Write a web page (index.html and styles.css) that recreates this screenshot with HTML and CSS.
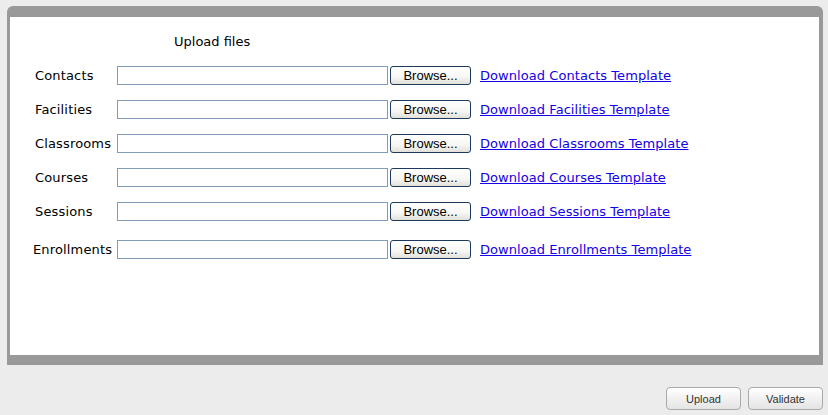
FILE: index.html
```html
<!DOCTYPE html>
<html>
<head>
<meta charset="utf-8">
<link rel="stylesheet" href="styles.css">
</head>
<body>
<div class="panel">
  <div class="title">Upload files</div>
  <div class="rows">
    <div class="row"><span class="label">Contacts</span><input class="file" type="text"><button class="browse">Browse...</button><a class="link" href="#">Download Contacts Template</a></div>
    <div class="row"><span class="label">Facilities</span><input class="file" type="text"><button class="browse">Browse...</button><a class="link" href="#">Download Facilities Template</a></div>
    <div class="row"><span class="label">Classrooms</span><input class="file" type="text"><button class="browse">Browse...</button><a class="link" href="#">Download Classrooms Template</a></div>
    <div class="row"><span class="label">Courses</span><input class="file" type="text"><button class="browse">Browse...</button><a class="link" href="#">Download Courses Template</a></div>
    <div class="row"><span class="label">Sessions</span><input class="file" type="text"><button class="browse">Browse...</button><a class="link" href="#">Download Sessions Template</a></div>
    <div class="row row-last"><span class="label label-wide">Enrollments</span><input class="file" type="text"><button class="browse">Browse...</button><a class="link" href="#">Download Enrollments Template</a></div>
  </div>
</div>
<div class="actions">
  <button class="action">Upload</button>
  <button class="action">Validate</button>
</div>
</body>
</html>
```

FILE: styles.css
```css
html, body {
  margin: 0;
  padding: 0;
}
body {
  background: #ececec;
  width: 828px;
  height: 415px;
  overflow: hidden;
  font-family: "DejaVu Sans", Verdana, sans-serif;
  font-size: 13px;
  color: #000;
}
.panel {
  margin: 6px 5px 0 7px;
  height: 338px;
  background: #fff;
  border-style: solid;
  border-color: #999999;
  border-width: 11px 4px 10px 3px;
  border-radius: 6px 6px 0 0;
}
.title {
  padding: 17px 0 0 164px;
  line-height: 16px;
  height: 16px;
}
.rows {
  margin-top: 8px;
  display: flex;
  flex-direction: column;
}
.row {
  height: 34px;
  display: flex;
  align-items: center;
  padding-left: 25px;
}
.row-last {
  margin-top: 4px;
}
.label {
  width: 82px;
  line-height: 16px;
  padding-top: 2px;
  letter-spacing: 0.15px;
}
.label-wide {
  margin-left: -2px;
  width: 84px;
}
.file {
  box-sizing: border-box;
  width: 271px;
  height: 19px;
  margin: 0;
  padding: 0 2px;
  border: 1px solid #7f9db9;
  background: #fff;
  font-size: 12px;
}
.browse {
  box-sizing: border-box;
  width: 81px;
  height: 19px;
  margin: 0 0 0 2px;
  padding: 0;
  border: 1px solid #1c3a5e;
  border-radius: 3px;
  background: linear-gradient(#ffffff, #f6f6f3 60%, #e2e0d8);
  font-family: "Liberation Sans", Arial, sans-serif;
  font-size: 13px;
  color: #000;
  line-height: 17px;
}
.link {
  margin-left: 9px;
  padding-top: 2px;
  color: #1400e6;
  text-decoration: underline;
  line-height: 16px;
  letter-spacing: 0.06px;
}
.actions {
  display: flex;
  justify-content: flex-end;
  gap: 7px;
  margin: 22px 5px 0 0;
}
.action {
  box-sizing: border-box;
  width: 75px;
  height: 23px;
  margin: 0;
  padding: 0;
  border: 1px solid #a9a9a9;
  border-radius: 4px;
  background: linear-gradient(#ffffff, #f1f1f1 50%, #e4e4e4);
  font-family: "Liberation Sans", Arial, sans-serif;
  font-size: 11px;
  color: #333;
}
```
